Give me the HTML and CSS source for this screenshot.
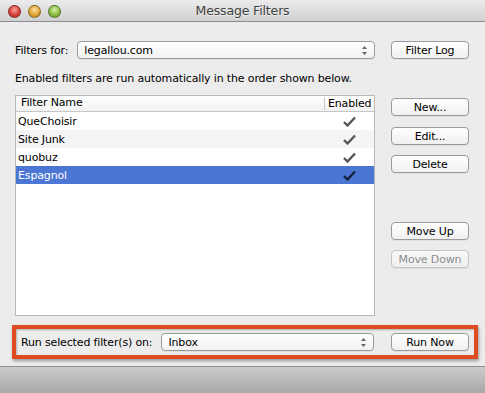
FILE: index.html
```html
<!DOCTYPE html>
<html lang="en">
<head>
    <meta charset="UTF-8">
    <title>Message Filters</title>
    <link rel="stylesheet" href="styles.css">
</head>
<body>
    <div class="window">
        <div class="titlebar">
            <div class="lights">
                <span class="light red"></span>
                <span class="light yellow"></span>
                <span class="light green"></span>
            </div>
            <div class="title">Message Filters</div>
        </div>

        <div class="content">
            <div class="grid-row top-row">
                <div class="field">
                    <span class="label">Filters for:</span>
                    <div class="popup">
                        <span>legallou.com</span>
                        <svg class="arrows" width="5" height="9" viewBox="0 0 5 9"><path d="M2.5 0 L5 3 L0 3 Z M2.5 9 L5 6 L0 6 Z" fill="#666"/></svg>
                    </div>
                </div>
                <button class="btn">Filter Log</button>
            </div>

            <p class="hint">Enabled filters are run automatically in the order shown below.</p>

            <div class="grid-row main-row">
                <div class="table">
                    <div class="thead">
                        <div class="col-name">Filter Name</div>
                        <div class="col-enabled">Enabled</div>
                    </div>
                    <div class="tbody" id="rows"></div>
                </div>
                <div class="side">
                    <button class="btn new-btn">New...</button>
                    <button class="btn edit-btn">Edit...</button>
                    <button class="btn delete-btn">Delete</button>
                    <button class="btn up-btn">Move Up</button>
                    <button class="btn down-btn" disabled>Move Down</button>
                </div>
            </div>

            <div class="run-box">
                <div class="run-row">
                    <div class="field">
                        <span class="label">Run selected filter(s) on:</span>
                        <div class="popup">
                            <span>Inbox</span>
                            <svg class="arrows" width="5" height="9" viewBox="0 0 5 9"><path d="M2.5 0 L5 3 L0 3 Z M2.5 9 L5 6 L0 6 Z" fill="#666"/></svg>
                        </div>
                    </div>
                    <button class="btn">Run Now</button>
                </div>
            </div>
        </div>

        <div class="bottombar"></div>
    </div>

    <script>
        const filters = [
            { name: "QueChoisir", enabled: true },
            { name: "Site Junk", enabled: true },
            { name: "quobuz", enabled: true },
            { name: "Espagnol", enabled: true, selected: true }
        ];

        const check = '<svg width="13" height="11" viewBox="0 0 13 11"><path d="M1 6 L4.5 9.5 L12 1.5" fill="none" stroke="currentColor" stroke-width="2.4" stroke-linejoin="miter"/></svg>';

        const rows = document.getElementById('rows');
        filters.forEach((f, i) => {
            const row = document.createElement('div');
            row.className = 'row' + (i % 2 ? ' alt' : '') + (f.selected ? ' selected' : '');
            row.innerHTML = `
                <div class="col-name">${f.name}</div>
                <div class="col-enabled">${f.enabled ? check : ''}</div>
            `;
            rows.appendChild(row);
        });
    </script>
</body>
</html>
```

FILE: styles.css
```css
* {
    margin: 0;
    padding: 0;
    box-sizing: border-box;
}

body {
    font-family: 'DejaVu Sans', 'Liberation Sans', sans-serif;
    font-size: 11px;
    letter-spacing: -0.15px;
    color: #000;
    background: #ececec;
}

.window {
    width: 485px;
    height: 393px;
    display: flex;
    flex-direction: column;
    background: #ececec;
    overflow: hidden;
}

.titlebar {
    height: 22px;
    position: relative;
    background: linear-gradient(#ebebeb, #d0d0d0);
    border-bottom: 1px solid #8c8c8c;
    display: flex;
    align-items: center;
    justify-content: center;
}

.lights {
    position: absolute;
    left: 8px;
    top: 5px;
    display: flex;
    gap: 7px;
}

.light {
    width: 13px;
    height: 13px;
    border-radius: 50%;
    border: 1px solid rgba(0,0,0,0.35);
}

.red { background: radial-gradient(circle at 50% 35%, #f8a29a, #d8433b 55%, #a8261f); }
.yellow { background: radial-gradient(circle at 50% 35%, #fbe3a1, #e0a635 55%, #a8741a); }
.green { background: radial-gradient(circle at 50% 35%, #d7f0a6, #8cbf45 55%, #5c8b22); }

.title {
    font-size: 12.5px;
    color: #404040;
    text-shadow: 0 1px 0 rgba(255,255,255,0.6);
}

.content {
    flex: 1;
    padding: 19px 16px 0 15px;
}

.grid-row {
    display: grid;
    grid-template-columns: 360px 78px;
    column-gap: 16px;
    align-items: center;
}

.field {
    display: flex;
    align-items: center;
    gap: 9px;
}

.label {
    white-space: nowrap;
}

.popup {
    flex: 1;
    height: 18px;
    border: 1px solid #9c9c9c;
    border-radius: 4px;
    background: linear-gradient(#ffffff, #f1f1f1);
    box-shadow: 0 1px 0 rgba(0,0,0,0.06);
    display: flex;
    align-items: center;
    justify-content: space-between;
    padding: 0 7px 0 6px;
}

.btn {
    height: 18px;
    font-family: inherit;
    font-size: 11px;
    letter-spacing: -0.15px;
    color: #000;
    border: 1px solid #9a9a9a;
    border-radius: 4px;
    background: linear-gradient(#ffffff, #f0f0f0);
    box-shadow: 0 1px 0 rgba(0,0,0,0.05);
    cursor: pointer;
}

.btn:disabled {
    color: #8d8d8d;
    border-color: #c3c3c3;
    background: linear-gradient(#f8f8f8, #efefef);
}

.hint {
    margin-top: 13px;
    line-height: 14px;
}

.main-row {
    margin-top: 9px;
    align-items: start;
}

.table {
    height: 221px;
    border: 1px solid #b9b9b9;
    background: #fff;
}

.thead {
    height: 16px;
    display: flex;
    border-bottom: 1px solid #c6c6c6;
    background: linear-gradient(#ffffff, #f2f2f2);
    line-height: 14px;
}

.thead .col-name {
    padding-left: 5px;
}

.thead .col-enabled {
    border-left: 1px solid #c8c8c8;
    padding-left: 3px;
    margin: 1px 0;
}

.col-name {
    flex: 1;
    padding-left: 2px;
}

.col-enabled {
    width: 50px;
    text-align: left;
}

.row {
    height: 18px;
    display: flex;
    align-items: center;
}

.row .col-enabled {
    display: flex;
    justify-content: center;
    color: #555;
    padding-left: 1px;
}

.row.alt {
    background: #f3f4f6;
}

.row.selected {
    background: #4b76d4;
    color: #fff;
}

.row.selected .col-enabled {
    color: #16233f;
}

.side {
    display: flex;
    flex-direction: column;
}

.new-btn { margin-top: 3px; }
.edit-btn { margin-top: 11px; }
.delete-btn { margin-top: 10px; }
.up-btn { margin-top: 49px; }
.down-btn { margin-top: 10px; }

.run-box {
    margin: 9px -9px 0 -3px;
    height: 34px;
    border: 4px solid #dd4c1f;
    box-shadow: 1px 2px 3px rgba(0,0,0,0.35), inset 1px 1px 2px rgba(0,0,0,0.25);
    padding: 0 5px;
    display: flex;
    align-items: center;
}

.run-row {
    display: grid;
    grid-template-columns: 353px 78px;
    column-gap: 17px;
    align-items: center;
}

.bottombar {
    height: 27px;
    border-top: 1px solid #8f8f8f;
    background: linear-gradient(#cbcbcb, #a7a7a7);
}
```
